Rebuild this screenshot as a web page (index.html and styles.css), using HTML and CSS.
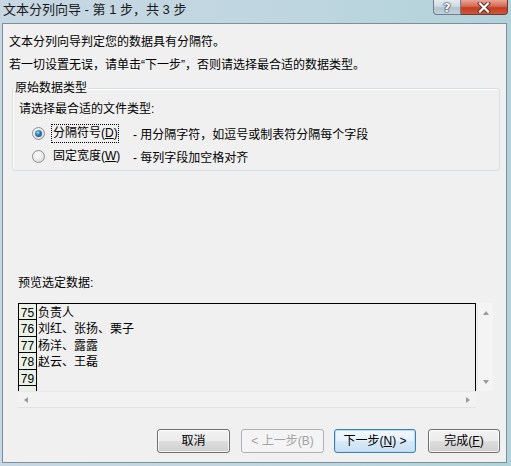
FILE: index.html
```html
<!DOCTYPE html>
<html lang="zh-CN">
<head>
<meta charset="utf-8">
<title>文本分列向导</title>
<link rel="stylesheet" href="styles.css">
</head>
<body>
<div class="window">
  <div class="titlebar">
    <span class="title">文本分列向导 - 第 1 步，共 3 步</span>
    <div class="caption-btns">
      <span class="cap help">?</span>
      <span class="cap close">
        <svg width="14" height="11" viewBox="0 0 14 11"><path d="M3 1.5 L11 9.5 M11 1.5 L3 9.5" stroke="#5a2a22" stroke-width="4" stroke-linecap="square"/><path d="M3 1.5 L11 9.5 M11 1.5 L3 9.5" stroke="#fff" stroke-width="2.2" stroke-linecap="square"/></svg>
      </span>
    </div>
  </div>
  <div class="client">
    <p class="line l1">文本分列向导判定您的数据具有分隔符。</p>
    <p class="line l2">若一切设置无误，请单击“下一步”，否则请选择最合适的数据类型。</p>
    <fieldset class="group">
      <legend>原始数据类型</legend>
      <p class="prompt">请选择最合适的文件类型:</p>
      <div class="opt opt1"><span class="radio on"></span><span class="lbl focus">分隔符号(<u>D</u>)</span><span class="desc">- 用分隔字符，如逗号或制表符分隔每个字段</span></div>
      <div class="opt opt2"><span class="radio"></span><span class="lbl">固定宽度(<u>W</u>)</span><span class="desc">- 每列字段加空格对齐</span></div>
    </fieldset>
    <p class="preview-label">预览选定数据:</p>
    <div class="preview">
      <div class="data">
        <div class="row"><span class="num">75</span><span class="txt">负责人</span></div>
        <div class="row"><span class="num">76</span><span class="txt">刘红、张扬、栗子</span></div>
        <div class="row"><span class="num">77</span><span class="txt">杨洋、露露</span></div>
        <div class="row"><span class="num">78</span><span class="txt">赵云、王磊</span></div>
        <div class="row"><span class="num">79</span><span class="txt"></span></div>
        <div class="row"><span class="num"></span><span class="txt"></span></div>
      </div>
      <div class="vscroll"><span class="arr up"></span><span class="arr down"></span></div>
      <div class="hscroll"><span class="arr left"></span><span class="arr right"></span></div>
      <div class="corner"></div>
    </div>
    <div class="buttons">
      <button class="btn b-cancel">取消</button>
      <button class="btn b-back" disabled>&lt; 上一步(B)</button>
      <button class="btn b-next">下一步(<u>N</u>) &gt;</button>
      <button class="btn b-finish">完成(<u>F</u>)</button>
    </div>
  </div>
</div>
</body>
</html>
```
FILE: styles.css
```css
html, body {
  margin: 0;
  padding: 0;
  width: 511px;
  height: 466px;
  overflow: hidden;
}

.window {
  width: 511px;
  height: 466px;
  box-sizing: border-box;
  padding: 0 4px 3px 2px;
  display: flex;
  flex-direction: column;
  background: linear-gradient(to right, #c7d7e3 0%, #bfd6e0 55%, #b1d2d8 100%);
  font-family: "Liberation Sans", "Noto Sans CJK SC", sans-serif;
}

.titlebar {
  height: 23px;
  display: flex;
  justify-content: space-between;
  align-items: flex-start;
  flex: none;
}

.title {
  font-size: 13px;
  line-height: 20px;
  margin-left: 1px;
  color: #1a1a1a;
  white-space: nowrap;
}

.caption-btns {
  display: flex;
  margin-right: -1px;
}

.cap {
  height: 15px;
  box-sizing: border-box;
  display: flex;
  align-items: center;
  justify-content: center;
  border: 1px solid #6d7f8c;
  border-top: none;
}

.help {
  width: 28px;
  border-radius: 0 0 0 4px;
  background: linear-gradient(#e4ecf1 0%, #cfdbe2 45%, #b3c4ce 55%, #c2d3dc 100%);
  font: bold 13px "DejaVu Sans", sans-serif;
  line-height: 13px;
  color: #f4f6f8;
  text-shadow: 0 0 1px #2d3b45, 0 0 1px #2d3b45, 0 0 2px #2d3b45;
}

.close {
  width: 47px;
  border-left: none;
  border-color: #6a3a32;
  border-radius: 0 0 4px 0;
  background: linear-gradient(#e7a597 0%, #d76a53 45%, #c43b20 55%, #d2573b 100%);
}

.client {
  flex: 1;
  border: 1px solid #7d8e9c;
  background: #f0f0f0;
  font-size: 12px;
  color: #000;
}

.line {
  margin: 0 0 0 6px;
  line-height: 16px;
  white-space: nowrap;
}

.l1 { margin-top: 10px; }
.l2 { margin-top: 7px; }

.group {
  margin: 7px 0 0 9px;
  width: 488px;
  box-sizing: border-box;
  border: 1px solid #d5dfe5;
  border-radius: 3px;
  padding: 0 0 4px 6px;
  min-width: 0;
  box-shadow: inset 1px 1px 0 #fff;
}

.group legend {
  padding: 0 1px;
  margin-left: -5px;
  line-height: 16px;
  font-size: 12px;
}

.prompt {
  margin: 5px 0 0 0;
  line-height: 16px;
}

.opt {
  display: flex;
  align-items: center;
  height: 20px;
  margin-left: 13px;
  white-space: nowrap;
}

.opt1 { margin-top: 6px; }
.opt2 { margin-top: 3px; }

.radio {
  position: relative;
  width: 13px;
  height: 13px;
  box-sizing: border-box;
  border-radius: 50%;
  border: 1px solid #8e8f8f;
  background: radial-gradient(circle at 40% 35%, #ffffff 0%, #eaeaea 50%, #cfcfcf 100%);
  margin-right: 6px;
  flex: none;
}

.radio.on::after {
  content: "";
  position: absolute;
  left: 2px;
  top: 2px;
  width: 7px;
  height: 7px;
  border-radius: 50%;
  background: radial-gradient(circle at 40% 35%, #8fd6f6 0%, #2b78b4 45%, #0f3f6a 100%);
}

.lbl {
  width: 68px;
  box-sizing: border-box;
  padding: 0 1px;
  line-height: 17px;
  border: 1px dotted transparent;
}

.lbl.focus {
  border-color: #000;
}

.desc {
  margin-left: 14px;
}

.preview-label {
  margin: 104px 0 0 15px;
  line-height: 16px;
}

.preview {
  margin: 12px 0 0 15px;
  width: 475px;
  height: 105px;
  display: grid;
  grid-template-columns: 458px 17px;
  grid-template-rows: 88px 17px;
}

.data {
  border: 1px solid #000;
  border-bottom: none;
  overflow: hidden;
  background: #f0f0f0;
}

.row {
  display: flex;
  height: 16.4px;
  box-sizing: border-box;
}

.num {
  width: 18px;
  flex: none;
  box-sizing: border-box;
  border-right: 1px solid #000;
  border-bottom: 1px solid #000;
  background: #eaf2e7;
  text-align: center;
  font: 12px "Liberation Sans", sans-serif;
  line-height: 17px;
  padding-top: 1px;
}

.txt {
  padding-left: 1px;
  line-height: 16px;
  font-family: "Noto Sans CJK SC", sans-serif;
  white-space: nowrap;
}

.vscroll {
  margin-left: 1px;
  background: #f4f4f4;
  border-left: 1px solid #ebebeb;
  display: flex;
  flex-direction: column;
  justify-content: space-between;
  align-items: center;
  padding: 8px 0 7px;
}

.hscroll {
  background: #f2f2f2;
  border-bottom: 1px solid #e2e2e2;
  border-top: 1px solid #e8e8e8;
  display: flex;
  justify-content: space-between;
  align-items: center;
  padding: 0 6px 0 6px;
}

.arr {
  width: 0;
  height: 0;
  border-style: solid;
  border-color: transparent;
}

.arr.up {
  border-width: 0 3.5px 4px 3.5px;
  border-bottom-color: #9a9a9a;
}

.arr.down {
  border-width: 4px 3.5px 0 3.5px;
  border-top-color: #9a9a9a;
}

.arr.left {
  border-width: 3.5px 4px 3.5px 0;
  border-right-color: #9a9a9a;
}

.arr.right {
  border-width: 3.5px 0 3.5px 4px;
  border-left-color: #9a9a9a;
}

.buttons {
  display: flex;
  justify-content: flex-end;
  margin: 21px 6px 0 0;
}

.btn {
  height: 24px;
  box-sizing: border-box;
  border: 1px solid #707070;
  border-radius: 3px;
  background: linear-gradient(#f2f2f2 0%, #ebebeb 48%, #dddddd 52%, #cfcfcf 100%);
  box-shadow: inset 0 0 0 1px rgba(255, 255, 255, 0.75);
  font-family: "Liberation Sans", "Noto Sans CJK SC", sans-serif;
  font-size: 12px;
  color: #000;
  padding: 0;
  line-height: 20px;
}

.b-cancel { width: 73px; margin-right: 11px; }
.b-back { width: 83px; margin-right: 10px; }
.b-next { width: 82px; margin-right: 12px; }
.b-finish { width: 72px; }

.b-back {
  border-color: #adb2b5;
  background: #f4f4f4;
  box-shadow: none;
  color: #a3a3a3;
}

.b-next {
  border-color: #3c7fb1;
  background: linear-gradient(#f1f8fd 0%, #e5f1fb 48%, #d6e9f7 52%, #c9e0f3 100%);
  box-shadow: inset 0 0 0 1px #b9dcf4;
}
```
